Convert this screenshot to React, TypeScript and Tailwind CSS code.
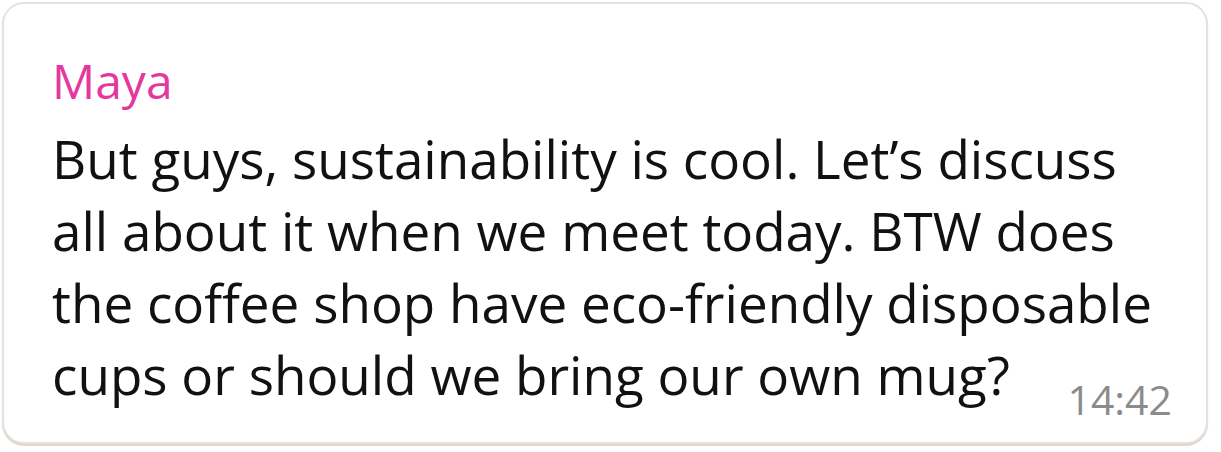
import React from 'react';

const App: React.FC = () => {
  return (
    <div className="w-[1221px] h-[452px] bg-white p-[2px]" style={{ fontFamily: '"Open Sans", "Noto Sans", sans-serif' }}>
      <div className="w-[1206px] h-[442px] bg-white rounded-[22px] border-2 border-[#e6e1db] shadow-[0_2px_1px_#ddd6ce] pl-[48px] pr-[34px] pt-[41px]">
        {/* Sender */}
        <div className="text-[48px] leading-[72px] text-[#e4389f]">Maya</div>

        {/* Message */}
        <p className="mt-[6px] text-[53px] leading-[72px] text-[#111111]">
          But guys, sustainability is cool. Let’s discuss
          <br />
          all about it when we meet today. BTW does
          <br />
          the coffee shop have eco-friendly disposable
          <br />
          cups or should we bring our own mug?
        </p>

        <div className="flex justify-end -mt-[36px]">
          <span className="text-[41px] leading-[48px] text-[#8b8b8b]">14:42</span>
        </div>
      </div>
    </div>
  );
};

export default App;
